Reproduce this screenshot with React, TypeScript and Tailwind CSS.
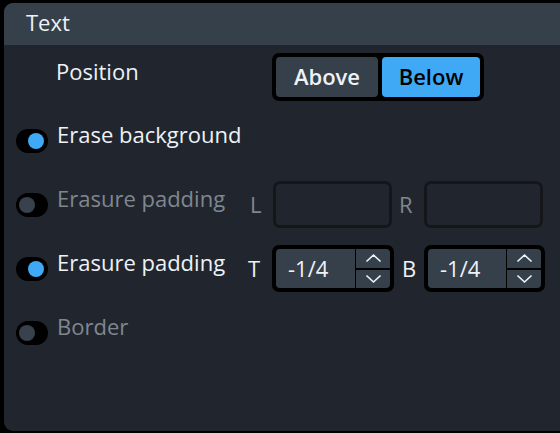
import React from 'react';

const font = { fontFamily: '"Open Sans", "Noto Sans", sans-serif' };

function Toggle({ on }: { on: boolean }) {
  return (
    <div
      className={
        'flex h-[24px] w-[32px] shrink-0 items-center rounded-full bg-black ' +
        (on ? 'justify-end pr-[4px]' : 'justify-start pl-[3px]')
      }
    >
      <div className={'h-[16px] w-[16px] rounded-full ' + (on ? 'bg-[#3fa9f5]' : 'bg-[#38424e]')} />
    </div>
  );
}

function Chevron({ up }: { up: boolean }) {
  return (
    <svg width="15" height="8" viewBox="0 0 15 8" fill="none">
      <polyline
        points={up ? '1,7 7.5,1 14,7' : '1,1 7.5,7 14,1'}
        stroke="#eef2f6"
        strokeWidth="1.7"
        strokeLinecap="round"
        strokeLinejoin="round"
      />
    </svg>
  );
}

function SpinBox({ value, width }: { value: string; width: string }) {
  return (
    <div className={'flex h-[47px] shrink-0 gap-px rounded-[7px] border-[3px] border-black bg-black p-px ' + width}>
      <div className="flex flex-1 items-center rounded-l-[4px] bg-[#36404b] pl-[12px] text-[22px] text-[#eef2f6]">
        {value}
      </div>
      <div className="flex w-[34px] flex-col gap-[2px]">
        <div className="flex flex-1 items-center justify-center rounded-tr-[4px] bg-[#36404b]">
          <Chevron up />
        </div>
        <div className="flex flex-1 items-center justify-center rounded-br-[4px] bg-[#36404b]">
          <Chevron up={false} />
        </div>
      </div>
    </div>
  );
}

function EmptyBox() {
  return <div className="h-[47px] w-[119px] shrink-0 rounded-[7px] border-[3px] border-[#141619]" />;
}

export default function App() {
  return (
    <div className="h-screen w-screen overflow-hidden bg-black pl-[4px] pt-[3px]" style={font}>
      <div className="flex h-[428px] w-full flex-col overflow-hidden rounded-l-[9px] bg-[#21262e]">
        <div className="flex h-[42px] shrink-0 items-center bg-[#36404b] pb-[4px] pl-[22px] text-[22px] text-[#eef2f6]">
          Text
        </div>

        <div className="flex flex-col gap-[17px] pt-[8px]">
          {/* position */}
          <div className="flex h-[47px] items-center">
            <div className="mb-[11px] w-[268px] pl-[52px] text-[22px] text-[#eef2f6]">Position</div>
            <div className="flex gap-[4px] rounded-[7px] border-[3px] border-black bg-black p-px">
              <div className="flex h-[40px] w-[102px] items-center justify-center rounded-[4px] bg-[#36404b] text-[22px] font-semibold text-[#eef2f6]">
                Above
              </div>
              <div className="flex h-[40px] w-[98px] items-center justify-center rounded-[4px] bg-[#3fa9f5] text-[22px] font-semibold text-black">
                Below
              </div>
            </div>
          </div>

          {/* erase background */}
          <div className="flex h-[47px] items-center pl-[12px]">
            <Toggle on />
            <div className="mb-[12px] ml-[9px] text-[22px] text-[#eef2f6]">Erase background</div>
          </div>

          {/* erasure padding L/R (disabled) */}
          <div className="flex h-[47px] items-center pl-[12px]">
            <Toggle on={false} />
            <div className="mb-[12px] ml-[9px] w-[191px] text-[22px] text-[#80878f]">Erasure padding</div>
            <div className="w-[25px] pl-[2px] text-[22px] text-[#80878f]">L</div>
            <EmptyBox />
            <div className="w-[32px] pl-[7px] text-[22px] text-[#80878f]">R</div>
            <EmptyBox />
          </div>

          {/* erasure padding T/B */}
          <div className="flex h-[47px] items-center pl-[12px]">
            <Toggle on />
            <div className="mb-[12px] ml-[9px] w-[191px] text-[22px] text-[#eef2f6]">Erasure padding</div>
            <div className="w-[24px] text-[22px] text-[#eef2f6]">T</div>
            <SpinBox value="-1/4" width="w-[122px]" />
            <div className="w-[30px] pl-[8px] text-[22px] text-[#eef2f6]">B</div>
            <SpinBox value="-1/4" width="w-[121px]" />
          </div>

          {/* border */}
          <div className="flex h-[47px] items-center pl-[12px]">
            <Toggle on={false} />
            <div className="mb-[12px] ml-[9px] text-[22px] text-[#80878f]">Border</div>
          </div>
        </div>
      </div>
    </div>
  );
}
